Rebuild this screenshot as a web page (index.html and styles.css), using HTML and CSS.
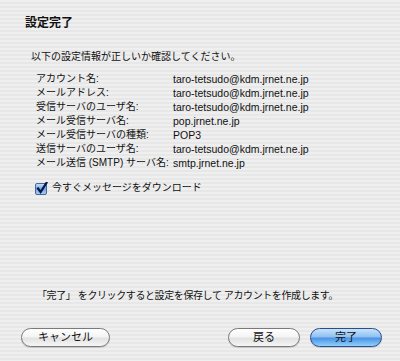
FILE: index.html
```html
<!DOCTYPE html>
<html lang="ja">
<head>
<meta charset="utf-8">
<link rel="stylesheet" href="styles.css">
</head>
<body>
<div class="dialog">
  <h1 class="title">設定完了</h1>
  <p class="intro">以下の設定情報が正しいか確認してください。</p>
  <div class="info">
    <div class="label">アカウント名:</div><div class="value">taro-tetsudo@kdm.jrnet.ne.jp</div>
    <div class="label">メールアドレス:</div><div class="value">taro-tetsudo@kdm.jrnet.ne.jp</div>
    <div class="label">受信サーバのユーザ名:</div><div class="value">taro-tetsudo@kdm.jrnet.ne.jp</div>
    <div class="label">メール受信サーバ名:</div><div class="value">pop.jrnet.ne.jp</div>
    <div class="label">メール受信サーバの種類:</div><div class="value">POP3</div>
    <div class="label">送信サーバのユーザ名:</div><div class="value">taro-tetsudo@kdm.jrnet.ne.jp</div>
    <div class="label">メール送信 (SMTP) サーバ名:</div><div class="value">smtp.jrnet.ne.jp</div>
  </div>
  <label class="check">
    <svg class="box" width="13" height="13" viewBox="0 0 13 13">
      <defs>
        <linearGradient id="cb" x1="0" y1="0" x2="0" y2="1">
          <stop offset="0" stop-color="#cfe3fb"/>
          <stop offset="0.5" stop-color="#6fa6e8"/>
          <stop offset="1" stop-color="#a9d0fb"/>
        </linearGradient>
      </defs>
      <rect x="0.5" y="1.5" width="11" height="11" rx="1.5" fill="url(#cb)" stroke="#4a6a94"/>
      <path d="M3 6.5 L5.6 10 L11.5 0.8" fill="none" stroke="#0a1446" stroke-width="2.2" stroke-linecap="square"/>
    </svg>
    <span>今すぐメッセージをダウンロード</span>
  </label>
  <div class="spacer"></div>
  <p class="note">「完了」 をクリックすると設定を保存して アカウントを作成します。</p>
  <div class="buttons">
    <button class="btn cancel">キャンセル</button>
    <div class="grow"></div>
    <button class="btn">戻る</button>
    <button class="btn primary">完了</button>
  </div>
</div>
</body>
</html>
```
FILE: styles.css
```css
html, body {
  margin: 0;
  padding: 0;
}
body {
  width: 400px;
  height: 361px;
  overflow: hidden;
  background: repeating-linear-gradient(to bottom, #efefef 0px, #efefef 2px, #e7e7e7 2px, #e7e7e7 4px);
  font-family: "Liberation Sans", "Noto Sans CJK JP", sans-serif;
  color: #111;
}
.dialog {
  box-sizing: border-box;
  height: 361px;
  padding-top: 16px;
  display: flex;
  flex-direction: column;
}
.title {
  margin: 0 0 0 25px;
  font-size: 12px;
  line-height: 14px;
  font-weight: bold;
}
.intro {
  margin: 20px 0 0 31px;
  font-size: 10px;
  line-height: 14px;
}
.info {
  margin: 8px 0 0 36px;
  display: grid;
  grid-template-columns: 137px auto;
  font-size: 10px;
  line-height: 14px;
}
.value {
  font-size: 10.5px;
}
.check {
  margin: 11px 0 0 35px;
  display: flex;
  align-items: center;
  gap: 4px;
  font-size: 10px;
  line-height: 14px;
}
.box {
  display: block;
}
.spacer {
  flex: 1;
}
.note {
  margin: 0 0 0 37px;
  font-size: 10px;
  line-height: 14px;
  letter-spacing: -0.4px;
}
.buttons {
  margin: 25px 18px 14px 21px;
  display: flex;
  align-items: center;
}
.grow {
  flex: 1;
}
.btn {
  box-sizing: border-box;
  height: 19px;
  border-radius: 10px;
  border: 1px solid #7a7a7a;
  background: linear-gradient(to bottom, #ffffff 0%, #f4f4f4 45%, #e2e2e2 55%, #f6f6f6 100%);
  font-family: "Liberation Sans", "Noto Sans CJK JP", sans-serif;
  font-size: 11px;
  line-height: 17px;
  padding: 0;
  color: #111;
  width: 72px;
  box-shadow: 0 1px 1px rgba(0,0,0,0.15);
}
.cancel {
  width: 89px;
}
.primary {
  margin-left: 10px;
  border-color: #2b4d8c;
  background: linear-gradient(to bottom, #c8e2fb 0%, #8ec2f3 45%, #4d94e6 55%, #8fd0fb 100%);
}
```
